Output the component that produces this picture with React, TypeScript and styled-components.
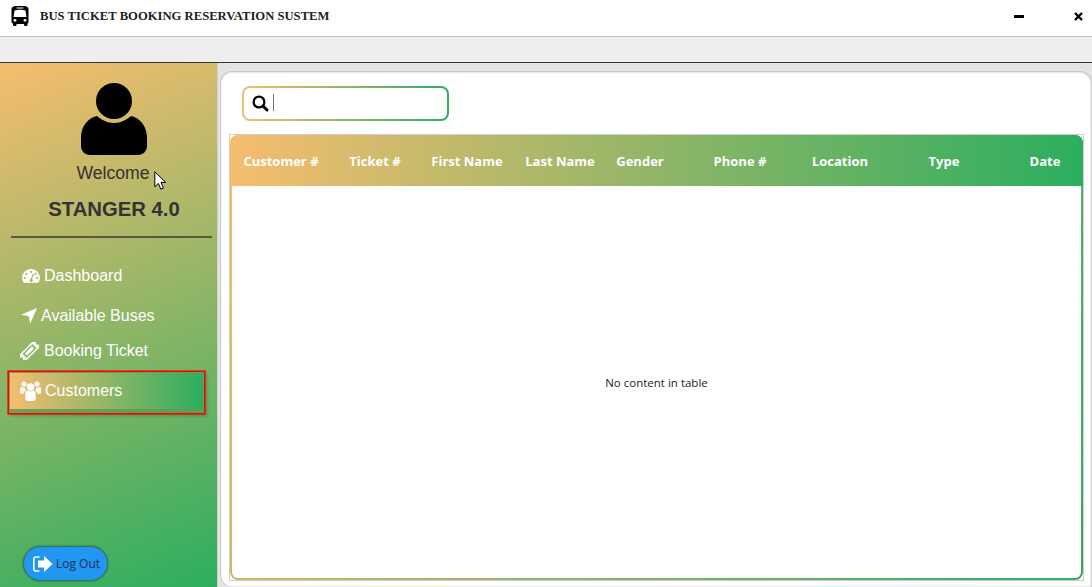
import React from "react";
import styled, { createGlobalStyle } from "styled-components";

const gradient = "#f6bd6f, #2cae5f";

const GlobalStyle = createGlobalStyle`
  html, body {
    margin: 0;
    padding: 0;
    background: #fff;
    overflow: hidden;
  }
  * {
    box-sizing: border-box;
  }
`;

const Window = styled.div`
  position: relative;
  display: flex;
  flex-direction: column;
  width: 1092px;
  height: 587px;
  overflow: hidden;
  font-family: "Liberation Sans", Arial, sans-serif;
`;

const TitleBar = styled.header`
  display: flex;
  align-items: center;
  height: 37px;
  padding: 0 8px 4px 11px;
  background: #fff;
  border-bottom: 1px solid #c0c0c0;
`;

const Title = styled.h1`
  flex: 1;
  margin: 0 0 0 11px;
  font-family: "Liberation Serif", "Times New Roman", serif;
  font-size: 12.65px;
  font-weight: 700;
  color: #222;
`;

const WindowButton = styled.button`
  display: flex;
  align-items: center;
  justify-content: center;
  width: 12px;
  height: 12px;
  margin-left: 47px;
  padding: 0;
  border: 0;
  background: none;
`;

const Toolbar = styled.div`
  height: 26px;
  background: #eeeeee;
  border-bottom: 1px solid #333;
`;

const Body = styled.div`
  display: flex;
  flex: 1;
  min-height: 0;
`;

const Sidebar = styled.aside`
  display: flex;
  flex-direction: column;
  width: 217px;
  padding-top: 20px;
  background: linear-gradient(157.5deg, ${gradient});
`;

const Profile = styled.div`
  display: flex;
  flex-direction: column;
  align-items: center;
  margin: 0 5px 0 11px;
  padding-left: 5px;
  border-bottom: 2px solid #575a3c;
  height: 155px;
`;

const Welcome = styled.div`
  margin: 7px 2px 0 0;
  font-size: 17.6px;
  line-height: 22px;
  color: #333;
`;

const UserName = styled.div`
  margin-top: 13px;
  font-size: 20.3px;
  line-height: 24px;
  font-weight: 700;
  color: #333;
`;

const Nav = styled.nav`
  display: flex;
  flex-direction: column;
  margin-top: 18px;
  padding-left: 8px;
`;

const NavItem = styled.a<{ $height: number; $active?: boolean; $gap: number; $indent: number }>`
  display: flex;
  align-items: center;
  gap: ${({ $gap }) => $gap}px;
  width: 197px;
  height: ${({ $height }) => $height}px;
  padding-left: ${({ $indent }) => $indent}px;
  font-size: 16px;
  color: #fff;
  ${({ $active }) =>
    $active
      ? `
    margin-top: 5px;
    padding-bottom: 4px;
    border: 1px solid #f00;
    outline: 1px solid rgba(255, 0, 0, 0.6);
    background: linear-gradient(to right, ${gradient}) no-repeat 1px 1px / calc(100% - 2px) 36px rgba(50, 80, 40, 0.22);
    box-shadow: 2px 2px 3px rgba(0, 0, 0, 0.2);
  `
      : ""}
`;

const LogOut = styled.button`
  display: flex;
  align-items: center;
  gap: 3px;
  width: 85px;
  height: 35px;
  margin: auto 0 6px 23px;
  padding: 0 0 0 9px;
  border: 1px solid #2f7a5f;
  border-radius: 18px;
  background: #2196f3;
  box-shadow: 0 0 2px rgba(0, 0, 0, 0.5);
  font-family: "Open Sans", sans-serif;
  font-size: 12px;
  color: #1c3350;
`;

const Content = styled.main`
  flex: 1;
  padding: 8px 0 0 3px;
  border-left: 1px solid #d0d0d0;
  background: #e4e4e4;
`;

const Card = styled.section`
  display: flex;
  flex-direction: column;
  height: 100%;
  margin-left: -1px;
  padding: 15px 8px 6px 9px;
  background: #fff;
  border-radius: 12px 12px 0 12px;
  box-shadow: inset 0 1px 2px #bbb, inset 1px 0 1px #ccc, inset -1px 0 2px #ccc;
`;

const SearchBox = styled.div`
  display: flex;
  align-items: center;
  gap: 4px;
  width: 207px;
  height: 35px;
  margin-left: 13px;
  padding-left: 8px;
  border: 2px solid transparent;
  border-radius: 8px;
  background:
    linear-gradient(#fff, #fff) padding-box,
    linear-gradient(to right, ${gradient}) border-box;
`;

const Caret = styled.span`
  width: 1px;
  height: 17px;
  margin-bottom: 2px;
  background: #777;
`;

const TableFrame = styled.div`
  display: flex;
  flex: 1;
  margin-top: 13px;
  border: 1px solid #cfcfcf;
`;

const Table = styled.div`
  display: flex;
  flex-direction: column;
  flex: 1;
  border: 2px solid transparent;
  border-radius: 8px;
  background:
    linear-gradient(#fff, #fff) padding-box,
    linear-gradient(117.6deg, ${gradient}) border-box;
`;

const HeaderRow = styled.div`
  display: grid;
  grid-template-columns: 100px 88px 96px 90px 70px 130px 70px 138px 64px;
  align-items: center;
  height: 51px;
  margin: -2px -2px 0;
  padding: 1px 0 0 1px;
  border-radius: 8px 8px 0 0;
  background: linear-gradient(to right, ${gradient});
`;

const HeaderCell = styled.div`
  text-align: center;
  font-family: "Open Sans", sans-serif;
  font-size: 13px;
  font-weight: 700;
  color: #fff;
  white-space: nowrap;
`;

const EmptyRow = styled.div`
  display: flex;
  flex: 1;
  align-items: center;
  justify-content: center;
  font-family: "Open Sans", sans-serif;
  font-size: 11.5px;
  color: #222;
`;

const Cursor = styled.svg`
  position: absolute;
  left: 154px;
  top: 171px;
`;

const columns = [
  "Customer #",
  "Ticket #",
  "First Name",
  "Last Name",
  "Gender",
  "Phone #",
  "Location",
  "Type",
  "Date",
];

const BusIcon = () => (
  <svg width="18" height="20" viewBox="0 0 18 20">
    <path
      fill="#000"
      d="M5 0h8c2.500 0 4.500 1 4.500 3v13c0 .8-.4 1.300-1 1.500V19a1 1 0 0 1-1 1h-1.500a1 1 0 0 1-1-1v-1H5.500v1a1 1 0 0 1-1 1H3a1 1 0 0 1-1-1v-1.500c-.8-.2-1.500-.7-1.500-1.500V3C.500 1 2.500 0 5 0Z"
    />
    <path fill="#fff" d="M3.500 4.500c3-1 8-1 11 0l1 6.500h-13ZM5.500 1.600h7v1h-7z" />
    <circle cx="4" cy="14.300" r="1.400" fill="#fff" />
    <circle cx="14" cy="14.300" r="1.400" fill="#fff" />
  </svg>
);

const UserIcon = () => (
  <svg width="66" height="72" viewBox="0 0 66 72">
    <circle cx="33" cy="18" r="18" fill="#000" />
    <path
      fill="#000"
      d="M16 33c4 3.500 10 7 17 7s13-3.500 17-7c9 2 16 10 16 22v8c0 5-4 9-9 9H9c-5 0-9-4-9-9v-8c0-12 7-20 16-22Z"
    />
  </svg>
);

const GaugeIcon = () => (
  <svg width="18" height="14" viewBox="0 0 19 15">
    <path
      fill="#fff"
      fillRule="evenodd"
      d="M9.500 0C4.300 0 0 4.200 0 9.500c0 2 .6 3.800 1.700 5.300h15.600c1.100-1.500 1.700-3.300 1.700-5.300C19 4.200 14.700 0 9.500 0ZM9.500 2a1.200 1.200 0 1 1 0 2.400 1.200 1.200 0 0 1 0-2.400ZM4.500 4a1.200 1.200 0 1 1 0 2.400 1.200 1.200 0 0 1 0-2.400ZM14.500 4a1.200 1.200 0 1 1 0 2.400 1.200 1.200 0 0 1 0-2.400ZM3 8.500a1.200 1.200 0 1 1 0 2.400 1.200 1.200 0 0 1 0-2.400ZM16 8.500a1.200 1.200 0 1 1 0 2.400 1.200 1.200 0 0 1 0-2.400ZM11.500 4.800l1.300.5-2.200 5.500a1.700 1.700 0 0 1-.6 3.200 1.700 1.700 0 0 1-.8-3.300Z"
    />
  </svg>
);

const ArrowIcon = () => (
  <svg width="16" height="16" viewBox="0 0 16 16">
    <path fill="#fff" d="M16 0 9.200 15.800 7.800 8.300 0 6.800Z" />
  </svg>
);

const TicketIcon = () => (
  <svg width="19" height="18" viewBox="0 0 19 18">
    <g transform="rotate(-45 9.500 9)" fill="#fff">
      <path
        fillRule="evenodd"
        d="M-2 4.500h23v2.700a1.800 1.800 0 0 0 0 3.600v2.700H-2v-2.700a1.800 1.800 0 0 0 0-3.600ZM2.500 6v6h14V6Z"
      />
      <rect x="4.500" y="7.500" width="10" height="3" />
    </g>
  </svg>
);

const UsersIcon = () => (
  <svg width="21" height="20" viewBox="0 0 21 20">
    <g fill="#fff">
      <circle cx="10.500" cy="6" r="3.700" />
      <circle cx="4" cy="3" r="2.600" />
      <circle cx="17" cy="3" r="2.600" />
      <path d="M5.300 12.500c0-1.800 1.500-3 2.700-3 .7.700 1.500 1 2.500 1s1.800-.3 2.500-1c1.200 0 2.700 1.200 2.700 3v5c0 1.300-1 2.500-2.500 2.500H7.800c-1.500 0-2.500-1.200-2.500-2.500Z" />
      <path d="M0 7.500C0 6.500.8 6 1.500 6c.8.600 1.500.8 2.500.8h1c-.3 1.300.3 2.300 1 3-1.500.4-2.300 1.500-2.500 3H1.300C.5 12.800 0 12.200 0 11.500Z" />
      <path d="M21 7.500C21 6.500 20.200 6 19.500 6c-.8.600-1.500.8-2.500.8h-1c.3 1.300-.3 2.300-1 3 1.500.4 2.300 1.500 2.500 3h2.200c.8 0 1.300-.6 1.300-1.300Z" />
    </g>
  </svg>
);

const SignOutIcon = () => (
  <svg width="20" height="16" viewBox="0 0 20 16">
    <path fill="#fff" d="M11 0l8.500 8-8.500 8v-4.500H5v-7h6Z" />
    <path fill="none" stroke="#fff" strokeWidth="1.600" d="M6.500 1H3a2.200 2.200 0 0 0-2.200 2.200v9.600A2.200 2.200 0 0 0 3 15h3.500" />
  </svg>
);

const SearchIcon = () => (
  <svg width="17" height="17" viewBox="0 0 17 17">
    <circle cx="7" cy="7" r="5.400" fill="none" stroke="#000" strokeWidth="2.300" />
    <path stroke="#000" strokeWidth="3" strokeLinecap="round" d="M11.500 11.500 15 15" />
  </svg>
);

export default function App() {
  return (
    <>
      <GlobalStyle />
      <Window>
        <TitleBar>
          <BusIcon />
          <Title>BUS TICKET BOOKING RESERVATION SUSTEM</Title>
          <WindowButton aria-label="Minimize">
            <svg width="10" height="3" viewBox="0 0 10 3">
              <rect width="10" height="3" fill="#000" />
            </svg>
          </WindowButton>
          <WindowButton aria-label="Close">
            <svg width="9" height="9" viewBox="0 0 9 9">
              <path stroke="#000" strokeWidth="2.400" d="M1 1l7 7M8 1 1 8" />
            </svg>
          </WindowButton>
        </TitleBar>
        <Toolbar />
        <Body>
          <Sidebar>
            <Profile>
              <UserIcon />
              <Welcome>Welcome</Welcome>
              <UserName>STANGER 4.0</UserName>
            </Profile>
            <Nav>
              <NavItem $height={40} $gap={4} $indent={14}>
                <GaugeIcon />
                Dashboard
              </NavItem>
              <NavItem $height={40} $gap={4} $indent={13}>
                <ArrowIcon />
                Available Buses
              </NavItem>
              <NavItem $height={30} $gap={5} $indent={12}>
                <TicketIcon />
                Booking Ticket
              </NavItem>
              <NavItem $height={43} $gap={4} $indent={11} $active>
                <UsersIcon />
                Customers
              </NavItem>
            </Nav>
            <LogOut>
              <SignOutIcon />
              Log Out
            </LogOut>
          </Sidebar>
          <Content>
            <Card>
              <SearchBox>
                <SearchIcon />
                <Caret />
              </SearchBox>
              <TableFrame>
                <Table>
                  <HeaderRow>
                    {columns.map((column) => (
                      <HeaderCell key={column}>{column}</HeaderCell>
                    ))}
                  </HeaderRow>
                  <EmptyRow>No content in table</EmptyRow>
                </Table>
              </TableFrame>
            </Card>
          </Content>
        </Body>
        <Cursor width="13" height="20" viewBox="0 0 13 20">
          <path fill="#fff" stroke="#000" strokeWidth="1" d="M.8.800v15l3.600-3.400 2.400 5.800 2.600-1.100-2.400-5.700h4.800Z" />
        </Cursor>
      </Window>
    </>
  );
}
